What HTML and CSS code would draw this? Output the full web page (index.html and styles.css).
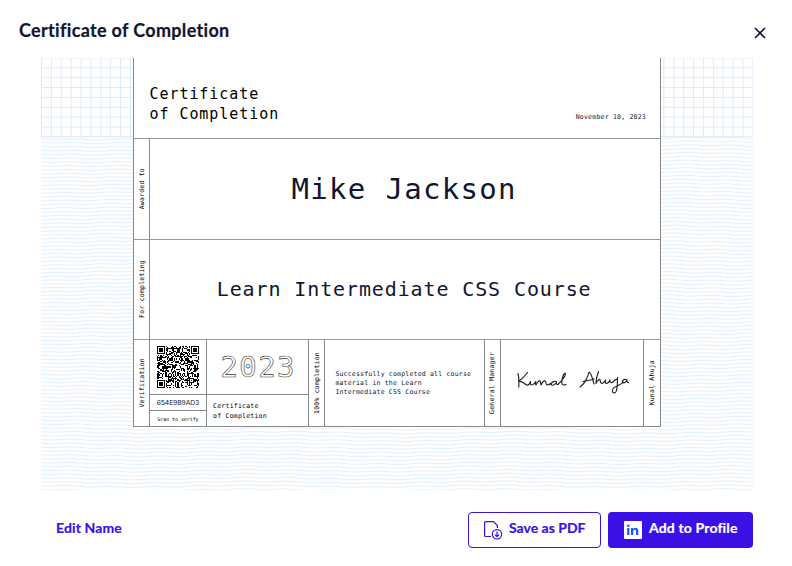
FILE: index.html
```html
<!DOCTYPE html>
<html lang="en">
<head>
<meta charset="utf-8">
<title>Certificate of Completion</title>
<link rel="stylesheet" href="styles.css">
</head>
<body>
<main class="dialog">
  <header class="head">
    <h1>Certificate of Completion</h1>
    <button class="close" aria-label="Close"><svg width="12" height="12" viewBox="0 0 12 12"><path d="M1 1l10 10M11 1L1 11" stroke="#10162f" stroke-width="1.6" fill="none"/></svg></button>
  </header>
  <section class="preview">
    <svg class="backdrop" width="712" height="432" aria-hidden="true">
      <defs>
        <pattern id="grid" width="9.88" height="9.88" patternUnits="userSpaceOnUse" x="0" y="-.6"><path d="M.5 0v9.88M0 .5h9.88" stroke="#dcebfb" stroke-width="1" fill="none"/></pattern>
      </defs>
      <rect width="712" height="79" fill="url(#grid)"/>
      <path d="M0 78.8h712" stroke="#dcebfb"/>
      <g id="waves" fill="none" stroke="#dcebfa" stroke-width=".8"></g>
    </svg>
    <article class="cert">
      <div class="row top"><p class="kind">Certificate<br>of Completion</p><p class="date">November 10, 2023</p></div>
      <div class="row band"><div class="side"><span>Awarded to</span></div><p class="name">Mike Jackson</p></div>
      <div class="row band"><div class="side"><span>For completing</span></div><p class="course">Learn Intermediate CSS Course</p></div>
      <div class="row foot">
        <div class="side"><span>Verification</span></div>
        <div class="verify">
          <div class="code"><svg id="qr" width="42" height="42" viewBox="0 0 37 37" shape-rendering="crispEdges"></svg></div>
          <p class="serial">654E9B9AD3</p>
          <p class="scan">Scan to verify</p>
        </div>
        <div class="issued">
          <div class="year"><svg width="102" height="54"><text x="13.5" y="36.5" textLength="74">2023</text></svg></div>
          <p class="small">Certificate<br>of Completion</p>
        </div>
        <div class="side"><span>100% completion</span></div>
        <p class="summary">Successfully completed all course<br>material in the Learn<br>Intermediate CSS Course</p>
        <div class="side"><span>General Manager</span></div>
        <div class="sign">
          <svg width="142" height="86" viewBox="501 340 142 86" fill="none" stroke="#222" stroke-width="1.15" stroke-linecap="round" stroke-linejoin="round"><path d="M518 373.500c1 4 1 9 .8 13.500M527.500 372.500c-2.500 3.500-5.500 6.500-9 9 4-1 4.500 1.500 8 3.500 2.500.5 3.500-1.500 4-3.500-.5 2.500.5 4 2.500 3 1.500-.8 2-1.500 2.800-3-.4 1.500-.4 3 .2 3.500 1-2.500 2.800-4.500 4-4 1 1 .3 3 1 4 1.200-2.500 3-4.500 4.300-4 1 1 0 3.500 1.700 4 2.500-.2 4.500-1.500 6.500-3.500M556.500 381.500c-3-1-6 1.500-5 3.500 2 .8 4-1 5-2.500-.3 1.500.5 2.500 1.500 2 3-3 7.500-8 7.500-11-2-1-4 6-3.700 9.500.3 1.800 2 2.500 4.200 1.500M580 387c4-2 8-10 9-15 2.500 1 3.500 7 5 12M583 381.500c4-1 9-1.500 11-2.500M598.500 371.500c-1.500 4-2.500 8-2.500 12 1-2.500 3-4.500 4-4 .3 2 .3 4 2 4 1.700-.3 2.800-2 3.500-3.500-.7 2.500 0 3.800 1.700 3.300 1.500-.6 2.300-1.800 2.800-3.300-.2 2.500 1.500 3.500 3.500 1.500 1-1.500 2.500-2.500 4-2M617.500 377.500c-.3 5 .5 12-2 15-2.500 1.500-4.500-1.500-2-4.500 3-2.500 7.500-3 10-6M627 380c-3-1.500-5.500.5-4.500 2.500 1.800 1 3.500-.5 4.500-2 0 1.500.7 2.300 1.700 2"/></svg>
        </div>
        <div class="side"><span>Kunal Ahuja</span></div>
      </div>
    </article>
  </section>
  <footer class="actions">
    <button class="link">Edit Name</button>
    <button class="btn outline"><svg width="19" height="19" viewBox="0 0 19 19" fill="none" stroke="#3a10e5" stroke-width="1.2"><path d="M7 15.500H1.600Q.6 15.500.6 14.500V1.600Q.6.6 1.600.6H9.500L13.400 4.500V7"/><circle cx="13" cy="13.300" r="4.700"/><path d="M13 10.500v5M10.900 13.600L13 15.700l2.100-2.100"/></svg><span>Save as PDF</span></button>
    <button class="btn solid"><svg width="18" height="18" viewBox="0 0 18 18"><rect width="18" height="18" rx="1" fill="#fff"/><g fill="#1557ff"><circle cx="4.300" cy="4.800" r="1.300"/><path d="M3.200 7h2.200v7H3.200zM7 7h2.100v1c1.500-2 5.200-1.500 5.200 2v4h-2.200v-3.700c0-2-2.900-2-2.900 0V14H7z"/></g></svg><span>Add to Profile</span></button>
  </footer>
</main>
<script src="script.js"></script>
</body>
</html>
```
FILE: styles.css
```css
* { box-sizing: border-box; margin: 0; }
body { width: 792px; height: 566px; overflow: hidden; background: #fff; color: #10162f; font-family: Lato, sans-serif; }
button { border: 0; background: none; padding: 0; font: inherit; }
.dialog { height: 566px; display: flex; flex-direction: column; }
.head { height: 58px; padding: 17px 26px 0 19px; display: flex; justify-content: space-between; align-items: flex-start; }
h1 { font-size: 18px; line-height: 26px; font-weight: 700; letter-spacing: .33px; -webkit-text-stroke: .2px #10162f; }
.close { display: flex; margin-top: 10px; }
.preview { position: relative; margin: 0 39px 0 41px; height: 432px; padding-left: 92px; overflow: hidden; flex: none; }
.backdrop { position: absolute; left: 0; top: 0; }
.cert { position: relative; width: 528px; height: 369px; background: #fff; border: 1px solid #888; border-top: 0; border-bottom: 0; font-family: "DejaVu Sans Mono", monospace; color: #000; }
.row { display: flex; border-bottom: 1px solid #999; }
.top { height: 81px; justify-content: space-between; padding: 26px 14px 0 15.500px; }
.kind { font-size: 15px; line-height: 20px; letter-spacing: .94px; }
.date { font-size: 6.500px; line-height: 8px; margin-top: 29px; letter-spacing: .22px; color: #10162f; }
.band { height: 100.500px; }
.side { width: 16.300px; flex: none; border-right: 1px solid #888; display: flex; align-items: center; justify-content: center; }
.side span { writing-mode: vertical-rl; transform: rotate(180deg); font-size: 6.500px; line-height: 10px; letter-spacing: .22px; white-space: nowrap; }
.name, .course { flex: 1; display: flex; align-items: center; justify-content: center; color: #10162f; white-space: nowrap; }
.name { font-size: 29px; letter-spacing: 1.300px; padding-right: 2px; }
.course { font-size: 20px; letter-spacing: .880px; padding-right: 2px; }
.foot { height: 87px; border-bottom: 1px solid #888; }
.verify { width: 56.400px; border-right: 1px solid #888; text-align: center; }
.code { height: 55px; border-bottom: 1px solid #888; padding: 6px 0 0; }
.serial { height: 16px; border-bottom: 1px solid #888; font: 6.800px/15px Inter, sans-serif; letter-spacing: -.1px; color: #10162f; white-space: nowrap; }
.scan { font-size: 4.900px; line-height: 16px; white-space: nowrap; }
.issued { width: 102.500px; border-right: 1px solid #888; }
.year { height: 55px; border-bottom: 1px solid #888; }
.year text { font-size: 29px; fill: #fff; stroke: #333; stroke-width: .6px; }
.small { font-size: 6.500px; line-height: 9.600px; padding: 7px 0 0 6.500px; letter-spacing: .22px; }
.summary { width: 159.500px; border-right: 1px solid #888; padding: 30px 0 0 10px; font-size: 6.500px; line-height: 9px; letter-spacing: .2px; color: #10162f; white-space: nowrap; }
.sign { width: 143px; border-right: 1px solid #888; overflow: hidden; }
.side:last-child { border-right: 0; }
.actions { display: flex; align-items: center; padding: 22px 39px 0 56px; font-size: 14px; font-weight: 700; color: #3a10e5; -webkit-text-stroke: .2px; }
.link { color: #3a10e5; margin: 0 auto 5px 0; letter-spacing: .12px; }
.btn { display: flex; align-items: center; height: 36px; border-radius: 4px; padding-left: 15px; }
.btn span { margin-bottom: 6px; white-space: nowrap; }
.outline { width: 133px; border: 1px solid #3a10e5; color: #3a10e5; gap: 6px; margin-right: 7px; }
.solid { width: 145px; background: #3a10e5; color: #fff; gap: 7px; padding-left: 16px; letter-spacing: .15px; }
```
FILE: script.js
```js
const ns = "http://www.w3.org/2000/svg";
const waves = document.getElementById("waves");
for (let i = 0; i < 93; i++) {
  const y = 80.5 + i * 3.82;
  let d = "";
  for (let x = 0; x <= 715; x += 3) {
    const v = y + Math.sin(x / 7 + i * 0.08) * 0.45 + Math.sin(x / 38 + i * 0.06) * 0.9;
    d += (x ? "L" : "M") + x + " " + v.toFixed(2);
  }
  const p = document.createElementNS(ns, "path");
  p.setAttribute("d", d);
  waves.append(p);
}

const n = 37;
const finder = (x, y) => {
  if (x < 0 || y < 0 || x > 6 || y > 6) return x >= -1 && y >= -1 && x <= 7 && y <= 7 ? 0 : null;
  const r = Math.max(Math.abs(x - 3), Math.abs(y - 3));
  return r === 2 ? 0 : 1;
};
let seed = 71, path = "";
for (let y = 0; y < n; y++) for (let x = 0; x < n; x++) {
  seed = (seed * 1103515245 + 12345) % 2147483648;
  let on = (seed >> 16) & 1;
  for (const [a, b] of [[0, 0], [30, 0], [0, 30]]) {
    const f = finder(x - a, y - b);
    if (f !== null) on = f;
  }
  const r = Math.max(Math.abs(x - 30), Math.abs(y - 30));
  if (r < 3) on = r === 1 ? 0 : 1;
  if (on) path += `M${x} ${y}h1v1h-1z`;
}
const q = document.createElementNS(ns, "path");
q.setAttribute("d", path);
document.getElementById("qr").append(q);
```
